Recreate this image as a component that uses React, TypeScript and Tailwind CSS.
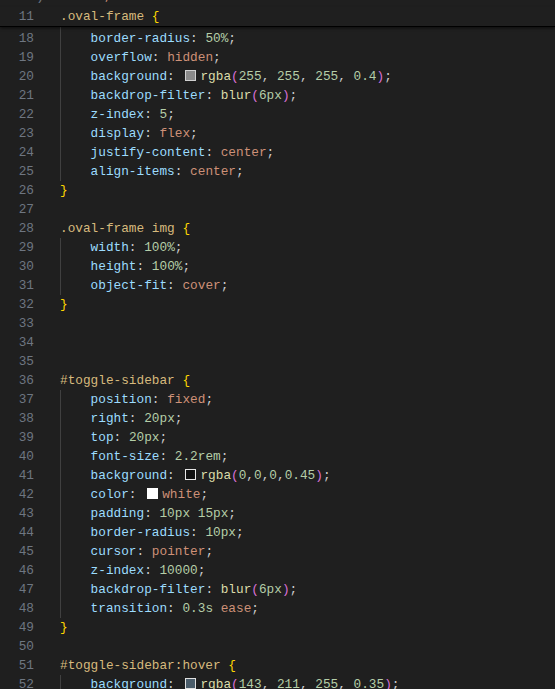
type Tok = [string, string];

const color: Record<string, string> = {
  p: "text-[#9cdcfe]",
  v: "text-[#ce9178]",
  n: "text-[#b5cea8]",
  f: "text-[#dcdcaa]",
  s: "text-[#d7ba7d]",
  b1: "text-[#ffd700]",
  b2: "text-[#da70d6]",
  t: "text-[#cccccc]",
};

const swatch: Record<string, string> = {
  gray: "bg-[#8a8a8a] border-[#d0d0d0]",
  black: "bg-[#111111] border-[#e6e6e6]",
  white: "bg-white border-white",
  blue: "bg-[#4b5d6a] border-[#e0e0e0]",
};

const decl = (prop: string, ...value: Tok[]): Tok[] => [["p", prop], ["t", ": "], ...value, ["t", ";"]];

const rgba = (sw: string, ...args: string[]): Tok[] => {
  const out: Tok[] = [["sw", sw], ["f", "rgba"], ["b2", "("]];
  args.forEach((a) => {
    if (a === "," || a === ", ") out.push(["t", a]);
    else out.push(["n", a]);
  });
  out.push(["b2", ")"]);
  return out;
};

const blur: Tok[] = [["f", "blur"], ["b2", "("], ["n", "6px"], ["b2", ")"]];

// [line number, indented, tokens]
const lines: [number, boolean, Tok[]][] = [
  [18, true, decl("border-radius", ["n", "50%"])],
  [19, true, decl("overflow", ["v", "hidden"])],
  [20, true, decl("background", ...rgba("gray", "255", ", ", "255", ", ", "255", ", ", "0.4"))],
  [21, true, decl("backdrop-filter", ...blur)],
  [22, true, decl("z-index", ["n", "5"])],
  [23, true, decl("display", ["v", "flex"])],
  [24, true, decl("justify-content", ["v", "center"])],
  [25, true, decl("align-items", ["v", "center"])],
  [26, false, [["b1", "}"]]],
  [27, false, []],
  [28, false, [["s", ".oval-frame img"], ["t", " "], ["b1", "{"]]],
  [29, true, decl("width", ["n", "100%"])],
  [30, true, decl("height", ["n", "100%"])],
  [31, true, decl("object-fit", ["v", "cover"])],
  [32, false, [["b1", "}"]]],
  [33, false, []],
  [34, false, []],
  [35, false, []],
  [36, false, [["s", "#toggle-sidebar"], ["t", " "], ["b1", "{"]]],
  [37, true, decl("position", ["v", "fixed"])],
  [38, true, decl("right", ["n", "20px"])],
  [39, true, decl("top", ["n", "20px"])],
  [40, true, decl("font-size", ["n", "2.2rem"])],
  [41, true, decl("background", ...rgba("black", "0", ",", "0", ",", "0", ",", "0.45"))],
  [42, true, decl("color", ["sw", "white"], ["v", "white"])],
  [43, true, decl("padding", ["n", "10px"], ["t", " "], ["n", "15px"])],
  [44, true, decl("border-radius", ["n", "10px"])],
  [45, true, decl("cursor", ["v", "pointer"])],
  [46, true, decl("z-index", ["n", "10000"])],
  [47, true, decl("backdrop-filter", ...blur)],
  [48, true, decl("transition", ["n", "0.3s"], ["t", " "], ["v", "ease"])],
  [49, false, [["b1", "}"]]],
  [50, false, []],
  [51, false, [["s", "#toggle-sidebar:hover"], ["t", " "], ["b1", "{"]]],
  [52, true, decl("background", ...rgba("blue", "143", ", ", "211", ", ", "255", ", ", "0.35"))],
];

const Tokens = ({ toks }: { toks: Tok[] }) => (
  <>
    {toks.map(([k, text], i) =>
      k === "sw" ? (
        <span
          key={i}
          className={`inline-block w-[11px] h-[11px] border ml-[3px] mr-[4px] align-[-1px] ${swatch[text]}`}
        />
      ) : (
        <span key={i} className={color[k]}>
          {text}
        </span>
      )
    )}
  </>
);

const Line = ({ num, indented, toks }: { num?: number; indented: boolean; toks: Tok[] }) => (
  <div className="flex h-[19px] leading-[19px] whitespace-pre">
    <div className="w-[60px] shrink-0">
      <span className="block w-[34px] text-right text-[#6e7681]">{num}</span>
    </div>
    {indented ? (
      <div className="flex">
        <div className="w-[30.6px] shrink-0 border-l border-[#404040]" />
        <div>
          <Tokens toks={toks} />
        </div>
      </div>
    ) : (
      <div>
        <Tokens toks={toks} />
      </div>
    )}
  </div>
);

export default function App() {
  return (
    <div className="relative w-[555px] h-[689px] overflow-hidden bg-[#1f1f1f] font-['Liberation_Mono',monospace] text-[12.75px]">
      {/* scrolled-off line above the sticky header */}
      <div className="h-[9.5px] overflow-hidden">
        <div className="mt-[-13px] flex h-[19px] leading-[19px] whitespace-pre">
          <span className="w-[44px] text-right text-[#6e7681]">)</span>
          <span className="ml-[60px] text-[#ce9178]">,</span>
        </div>
      </div>

      {/* line 17 sits under the sticky header */}
      <Line indented toks={[]} />

      {lines.map(([num, indented, toks]) => (
        <Line key={num} num={num} indented={indented} toks={toks} />
      ))}

      {/* sticky scroll header */}
      <div className="absolute left-0 right-0 top-[6.5px] bg-[#1f1f1f] shadow-[0_1px_0_#000,0_2px_3px_rgba(0,0,0,0.6)]">
        <div className="flex h-[19px] leading-[19px] whitespace-pre">
          <div className="w-[60px] shrink-0">
            <span className="block w-[34px] text-right text-[#6e7681]">11</span>
          </div>
          <div>
            <span className="text-[#d7ba7d]">.oval-frame</span>
            <span className="text-[#cccccc]"> </span>
            <span className="text-[#ffd700]">{"{"}</span>
          </div>
        </div>
      </div>
    </div>
  );
}
